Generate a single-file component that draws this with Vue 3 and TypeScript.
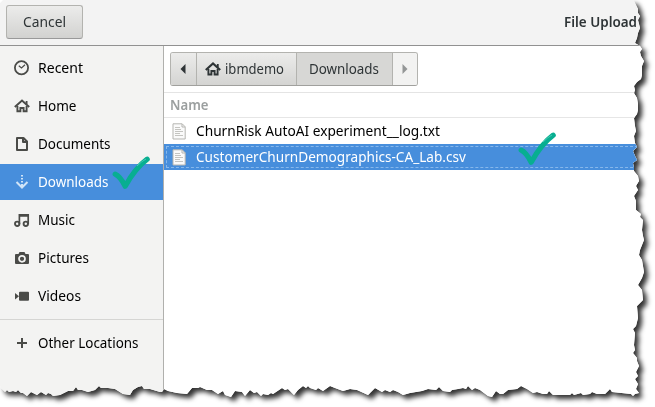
<script setup lang="ts">
interface Place { name: string; icon: string; width: number; active?: boolean }
interface FileRow { name: string; width: number; selected: boolean }

const places: Place[] = [
  { name: 'Recent', icon: 'recent', width: 45 },
  { name: 'Home', icon: 'home', width: 38.5 },
  { name: 'Documents', icon: 'document', width: 72.5 },
  { name: 'Downloads', icon: 'download', width: 70.5, active: true },
  { name: 'Music', icon: 'music', width: 37 },
  { name: 'Pictures', icon: 'camera', width: 51 },
  { name: 'Videos', icon: 'video', width: 43 },
]
const files: FileRow[] = [
  { name: 'ChurnRisk AutoAI experiment__log.txt', width: 244, selected: false },
  { name: 'CustomerChurnDemographics-CA_Lab.csv', width: 270, selected: true },
]

// Outline of the torn right and bottom edges of the window.
const rightEdge = '634,1 636,5 638,9 638,13 640,16 638,20 639,24 640,28 638,33 637,38 635,43 640,46 642,49 640,52 641,56 644,61 642,66 642,75 641,79 637,82 634,86 635,90 634,93 637,98 638,104 638,110 637,114 634,118 635,126 636,131 634,136 635,143 637,147 633,151 635,156 637,160 633,163 634,168 634,171 638,176 639,181 636,186 638,190 634,196 636,201 636,210 641,214 640,217 643,220 642,230 643,236 644,240 640,250 639,255 642,260 644,272 642,278 638,285 642,290 643,300 637,306 638,318 636,326 633,329 635,333 634,345 635,350 633,353 637,358 637,361 639,366 636,372 638,376 635,379 638,384 636,389 639,393 635,394 633,396 631,394'
const bottomEdge = '612,392 610,389 605,394 597,394 592,392 590,394 583,395 581,393 574,395 572,393 570,395 553,395 549,391 547,394 543,394 537,392 533,393 527,389 521,386 517,389 508,390 503,394 500,394 496,391 492,397 488,396 480,390 475,388 472,390 468,386 466,389 463,388 458,389 452,390 450,392 443,391 439,387 436,390 428,389 422,391 410,393 403,395 398,392 393,390 390,392 385,390 382,392 375,388 368,395 357,390 350,389 343,391 335,388 330,386 323,391 318,388 316,390 310,388 308,386 306,388 303,386 298,390 294,395 288,389 285,390 282,388 273,394 271,393 268,395 263,394 261,396 257,392 254,393 250,390 245,396 242,392 235,391 231,397 225,395 223,391 218,394 212,390 207,390 200,387 198,388 192,388 187,394 177,393 168,391 164,389 162,392 160,392 150,389 144,389 142,386 138,387 133,390 130,395 123,394 115,389 108,388 101,388 99,386 95,390 88,392 82,390 78,390 76,387 73,391 68,391 60,395 53,396 51,394 48,393 46,395 41,392 37,395 31,392 27,396 23,393 21,393 18,390 16,392 13,391 9,392 7,390 5,392 1,388 0,386'
const outline = 'polygon(' + ('0,3 3,0 634,0 ' + rightEdge + ' ' + bottomEdge)
  .split(' ')
  .map((p) => p.split(',').map((n) => n + 'px').join(' '))
  .join(', ') + ')'
</script>

<template>
  <div class="stage">
    <div class="shadow">
      <div class="window" :style="{ clipPath: outline }">
        <header class="titlebar">
          <button class="cancel"><svg class="label" width="44" height="22"><text x="0" y="16" textLength="43" lengthAdjust="spacingAndGlyphs">Cancel</text></svg></button>
          <svg class="title" width="74" height="22"><text x="0" y="16" textLength="73" lengthAdjust="spacingAndGlyphs">File Upload</text></svg>
        </header>
        <div class="body">
          <nav class="sidebar">
            <div v-for="p in places" :key="p.name" class="place" :class="{ active: p.active }">
              <svg class="icon" viewBox="0 0 16 16" fill="none" stroke="currentColor">
                <template v-if="p.icon === 'recent'">
                  <circle cx="7.5" cy="7.7" r="6.6" stroke-width="1.8" />
                  <path d="M4.8 5.8l2.7 2.2L11 4.8" stroke-width="1.2" />
                </template>
                <template v-else-if="p.icon === 'home'">
                  <path d="M.8 9L8 2.6 15.2 9" stroke-width="2" />
                  <path d="M3.4 8v5.3h3V10h3.2v3.3h3V8" stroke-width="1.9" />
                  <path d="M12.6 3v3" stroke-width="1.8" />
                </template>
                <path v-else-if="p.icon === 'document'" d="M3 2h6.5L13 5.5V14H3zM9 2v4h4" stroke-width="2" stroke-linejoin="round" />
                <template v-else-if="p.icon === 'download'">
                  <path d="M8 1v9" stroke-width="2" stroke-dasharray="1.5 1.5" />
                  <path d="M8 10v3M2.5 8L8 13.5 13.5 8" stroke-width="2" />
                </template>
                <template v-else-if="p.icon === 'music'">
                  <path d="M5.4 12V2.8h8.8V12M5.4 4h8.8" stroke-width="1.7" />
                  <circle cx="3.2" cy="11.8" r="2.2" stroke-width="1.9" />
                  <circle cx="11.8" cy="11.8" r="2.2" stroke-width="1.9" />
                </template>
                <template v-else-if="p.icon === 'camera'">
                  <path d="M2 4h2.5l1-2h5l1 2H14q1 0 1 1v8q0 1-1 1H2q-1 0-1-1V5q0-1 1-1z" fill="currentColor" stroke="none" />
                  <circle cx="8" cy="8.8" r="3" class="ring" stroke-width="1.7" />
                </template>
                <template v-else>
                  <rect x="5" y="3.8" width="10" height="9" rx="1" fill="currentColor" stroke="none" />
                  <path d="M1 5l4 3.3-4 3.3z" fill="currentColor" stroke="none" />
                </template>
              </svg>
              <svg class="label" :width="p.width + 3" height="22"><text x="0" y="16" :textLength="p.width" lengthAdjust="spacingAndGlyphs">{{ p.name }}</text></svg>
            </div>
            <div class="rule"></div>
            <div class="place">
              <svg class="icon" viewBox="0 0 16 16" fill="none" stroke="currentColor" stroke-width="2"><path d="M3 8h10M8 3v10" /></svg>
              <svg class="label" width="104" height="22"><text x="0" y="16" textLength="100.5" lengthAdjust="spacingAndGlyphs">Other Locations</text></svg>
            </div>
          </nav>
          <main class="content">
            <div class="pathbar">
              <div class="crumbs">
                <button class="step"><svg width="6" height="10"><path d="M5.5 0v10L.5 5z" fill="currentColor" /></svg></button>
                <button class="crumb home">
                  <svg class="icon" viewBox="0 0 16 16" fill="none" stroke="currentColor">
                    <path d="M.8 9L8 2.4 15.2 9" stroke-width="2.2" />
                    <path d="M3.4 8v5.5h3V10h3.2v3.5h3V8" stroke-width="1.9" />
                    <path d="M12.8 3v3" stroke-width="1.8" />
                  </svg>
                  <svg class="label" width="60" height="22"><text x="0" y="16" textLength="59" lengthAdjust="spacingAndGlyphs">ibmdemo</text></svg>
                </button>
                <button class="crumb current"><svg class="label" width="71" height="22"><text x="0" y="16" textLength="70" lengthAdjust="spacingAndGlyphs">Downloads</text></svg></button>
                <button class="step next"><svg width="6" height="10"><path d="M.5 0v10l5-5z" fill="currentColor" /></svg></button>
              </div>
            </div>
            <div class="column"><svg class="label" width="42" height="22"><text x="0" y="16" textLength="38.5" lengthAdjust="spacingAndGlyphs">Name</text></svg></div>
            <div v-for="f in files" :key="f.name" class="file" :class="{ selected: f.selected }">
              <svg class="sheet" viewBox="0 0 14 17">
                <path d="M1 .8h9.2l3 3V16H1z" fill="#fafafa" stroke="#b5b5b1" />
                <path d="M10 1v3h3" fill="none" stroke="#b5b5b1" />
                <path d="M3 4.5h5M3 6.5h6M3 8.5h8M3 10.5h5M3 12.5h8" stroke="#bdbdb9" stroke-width=".9" />
              </svg>
              <svg class="label" :width="f.width + 3" height="22"><text x="0" y="16" :textLength="f.width" lengthAdjust="spacingAndGlyphs">{{ f.name }}</text></svg>
            </div>
          </main>
        </div>
      </div>
    </div>
    <svg v-for="spot in ['place-check', 'file-check']" :key="spot" class="check" :class="spot" viewBox="0 0 40 34">
      <path d="M3.2 18.2q5 2.3 10 12 10-18 22-27" fill="none" stroke="#08ae91" stroke-width="5.2" stroke-linecap="round" stroke-linejoin="round" />
      <path d="M25 10q5-5 9-7" fill="none" stroke="#45cbb2" stroke-width="1" />
    </svg>
  </div>
</template>

<style>
body { margin: 0; background: #fff; }
</style>

<style scoped>
.stage { position: relative; width: 655px; height: 407px; overflow: hidden; background: #fff; font-family: "Noto Sans", "Open Sans", sans-serif; font-size: 14.6px; color: #000; }
.shadow { filter: drop-shadow(4px 4px 2.5px #333); }
.window { width: 655px; height: 407px; display: flex; flex-direction: column; background: #fff; }
button { font: inherit; margin: 0; padding: 0; color: #2e3436; box-sizing: border-box; }
svg { display: block; flex: none; overflow: visible; }
.label text, .title text { fill: currentColor; }
.titlebar { height: 46px; box-sizing: border-box; border-bottom: 1px solid #919191; background: #f3f3f3; display: flex; align-items: center; justify-content: space-between; padding: 0 17px 1px 6px; }
.cancel { width: 77px; height: 34px; border: 1px solid #b3b3af; border-bottom-color: #999; border-radius: 3px; background: linear-gradient(#ececeb, #d2d2d0); display: flex; align-items: center; justify-content: center; }
.title { color: #2e3436; font-weight: 600; }
.body { flex: 1; display: flex; min-height: 0; }
.sidebar { width: 163px; border-right: 1px solid #b0b0ad; background: #f3f3f2; padding-top: 4px; }
.place { height: 36px; margin-bottom: 2px; padding-left: 14px; display: flex; align-items: center; gap: 8px; }
.icon { width: 16px; height: 16px; color: #4a4b48; }
.place.active { background: #478edc; color: #fff; }
.active .icon { color: #d0e4f7; }
.ring { stroke: #f3f3f2; }
.rule { height: 1px; background: #d5d5d3; margin: 3px 0 5px; position: relative; }
.place + .rule { margin-top: 5px; }
.content { flex: 1; background: #fff; }
.pathbar { height: 40px; border-bottom: 1px solid #e4e4e4; padding: 6px 0 0 6px; }
.crumbs { display: flex; width: 248px; height: 34px; box-sizing: border-box; border: 1px solid #b3b3af; border-bottom-color: #a0a09d; border-radius: 3px; overflow: hidden; }
.crumbs button { display: flex; align-items: center; justify-content: center; border: 0; border-right: 1px solid #b3b3af; background: linear-gradient(#ececeb, #d4d4d2); }
.crumbs .step { width: 26px; padding-right: 2px; }
.crumbs .home { width: 100px; gap: 4px; padding-right: 4px; }
.crumbs .home .icon { color: #2e3436; }
.crumbs .current { width: 96px; background: #d7d7d5; }
.crumbs .next { width: 24px; padding: 0; border: 0; background: #f2f2f1; color: #939696; }
.column { height: 24px; border-bottom: 1px solid #e6e6e6; padding-left: 6px; display: flex; align-items: center; color: #9b9f9f; font-weight: 600; }
.file { position: relative; height: 26px; display: flex; align-items: center; padding-left: 8px; gap: 10px; }
.sheet { width: 14px; height: 17px; }
.selected { background: #478edc; color: #fff; }
.selected::after { content: ""; position: absolute; inset: 2px; border: 1px dashed #86b7eb; }
.check { position: absolute; width: 40px; height: 34px; }
.place-check { left: 112px; top: 156px; }
.file-check { left: 518px; top: 132px; }
</style>
